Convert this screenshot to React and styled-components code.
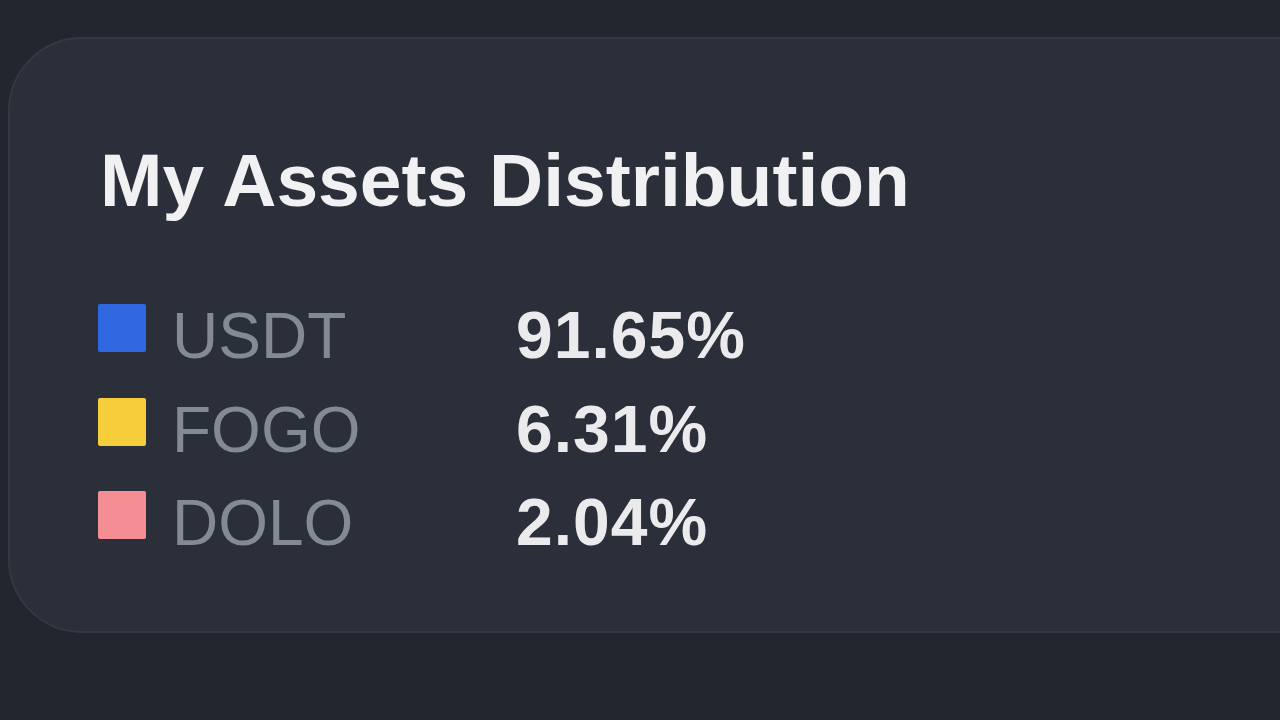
import React from 'react';
import styled, { createGlobalStyle } from 'styled-components';

const GlobalStyle = createGlobalStyle`
  html, body {
    margin: 0;
    padding: 0;
    background: #22262f;
  }
  body {
    font-family: "Liberation Sans", Arial, sans-serif;
    overflow: hidden;
  }
`;

const Page = styled.div`
  width: 1280px;
  height: 720px;
  padding: 37px 0 0 8px;
  box-sizing: border-box;
  overflow: hidden;
`;

const Card = styled.section`
  width: 1400px;
  box-sizing: border-box;
  background: #2a2f3a;
  border: 2px solid #343844;
  border-radius: 74px;
  padding: 104px 0 76px 88px;
`;

const Title = styled.h2`
  margin: 0 0 84px 2px;
  font-size: 75px;
  line-height: 1;
  font-weight: 700;
  color: #f1f1f3;
  letter-spacing: 0;
`;

const Legend = styled.ul`
  list-style: none;
  margin: 0;
  padding: 0;
  display: flex;
  flex-direction: column;
  gap: 27.5px;
`;

const Row = styled.li`
  display: grid;
  grid-template-columns: 74px 344px auto;
  align-items: start;
  height: 66px;
`;

const Swatch = styled.span`
  display: block;
  width: 48px;
  height: 48px;
  margin-top: 2px;
  border-radius: 2px;
  background: ${p => p.color};
`;

const Label = styled.span`
  font-size: 64px;
  line-height: 1;
  margin-top: 2px;
  color: #838995;
`;

const Value = styled.span`
  font-size: 66px;
  line-height: 1;
  font-weight: 700;
  color: #ebebee;
  letter-spacing: 1px;
`;

const assets = [
  { name: 'USDT', pct: '91.65%', color: '#2f68e0' },
  { name: 'FOGO', pct: '6.31%', color: '#f6cd3b' },
  { name: 'DOLO', pct: '2.04%', color: '#f48d94' },
];

export default function App() {
  return (
    <Page>
      <GlobalStyle />
      <Card>
        <Title>My Assets Distribution</Title>
        <Legend>
          {assets.map(a => (
            <Row key={a.name}>
              <Swatch color={a.color} />
              <Label>{a.name}</Label>
              <Value>{a.pct}</Value>
            </Row>
          ))}
        </Legend>
      </Card>
    </Page>
  );
}
